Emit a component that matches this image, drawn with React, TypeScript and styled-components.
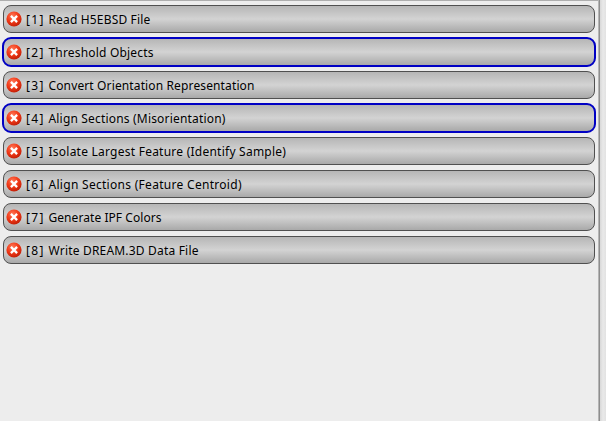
import React from 'react';
import styled, { createGlobalStyle } from 'styled-components';

const GlobalStyle = createGlobalStyle`
  *, *::before, *::after { box-sizing: border-box; }
  body { margin: 0; background: #ececec; overflow: hidden; }
`;

const Page = styled.div`
  display: flex;
  width: 606px;
  height: 421px;
  background: #ededed;
  font-family: 'Noto Sans', 'Open Sans', sans-serif;
`;

const Pipeline = styled.main`
  width: 598px;
  height: 421px;
  border-top: 1px solid #aeaeae;
  padding: 3px 2px 0;
  display: flex;
  flex-direction: column;
  gap: 3px;
`;

const Divider = styled.div`
  width: 8px;
  border-left: 1px solid #b5b5b5;
  background: linear-gradient(to right, #8e8e8e 1px, #d8d8d8 1px, #e9e9e9 4px, #e2e2e2 7px);
`;

const Filter = styled.div<{ $selected: boolean }>`
  display: flex;
  align-items: center;
  flex: none;
  height: ${p => (p.$selected ? 30 : 28)}px;
  margin: ${p => (p.$selected ? 0 : 1)}px;
  padding-left: 2px;
  border: ${p => (p.$selected ? '2px solid #0000c4' : '1px solid #505050')};
  border-radius: ${p => (p.$selected ? 9 : 8)}px;
  background: linear-gradient(to bottom, #b6b6b6 0%, #d3d3d3 50%, #a9a9a9 100%);
`;

const Icon = styled.svg`
  flex: none;
  width: 16px;
  height: 16px;
`;

const Text = styled.span`
  padding-top: 2px;
  font-size: 12px;
  line-height: 16px;
  white-space: pre;
  color: #000;
`;

const Index = styled(Text)`
  width: 22.5px;
  margin-left: 4px;
  letter-spacing: 1.3px;
`;

const Name = styled(Text)<{ $spacing: number }>`
  letter-spacing: ${p => p.$spacing}px;
`;

const filters = [
  { name: 'Read H5EBSD File', spacing: 0.16 },
  { name: 'Threshold Objects', selected: true, spacing: 0.18 },
  { name: 'Convert Orientation Representation', spacing: 0.13 },
  { name: 'Align Sections (Misorientation)', selected: true, spacing: 0.18 },
  { name: 'Isolate Largest Feature (Identify Sample)', spacing: 0.24 },
  { name: 'Align Sections (Feature Centroid)', spacing: 0.29 },
  { name: 'Generate IPF Colors', spacing: 0.06 },
  { name: 'Write DREAM.3D Data File', spacing: 0.19 },
];

function RemoveIcon() {
  return (
    <Icon viewBox="0 0 16 16">
      <defs>
        <radialGradient id="redball" cx="0.4" cy="0.3" r="0.7">
          <stop offset="0" stopColor="#ff7858" />
          <stop offset="0.55" stopColor="#f23a18" />
          <stop offset="1" stopColor="#c42008" />
        </radialGradient>
      </defs>
      <circle cx="8" cy="8" r="7.6" fill="url(#redball)" />
      <path d="M4.9 4.9 11.1 11.1M11.1 4.9 4.9 11.1" stroke="#fff" strokeWidth="2.3" />
    </Icon>
  );
}

export default function App() {
  return (
    <Page>
      <GlobalStyle />
      <Pipeline>
        {filters.map((f, i) => (
          <Filter key={f.name} $selected={!!f.selected}>
            <RemoveIcon />
            <Index>{`[${i + 1}]`}</Index>
            <Name $spacing={f.spacing}>{f.name}</Name>
          </Filter>
        ))}
      </Pipeline>
      <Divider />
    </Page>
  );
}
